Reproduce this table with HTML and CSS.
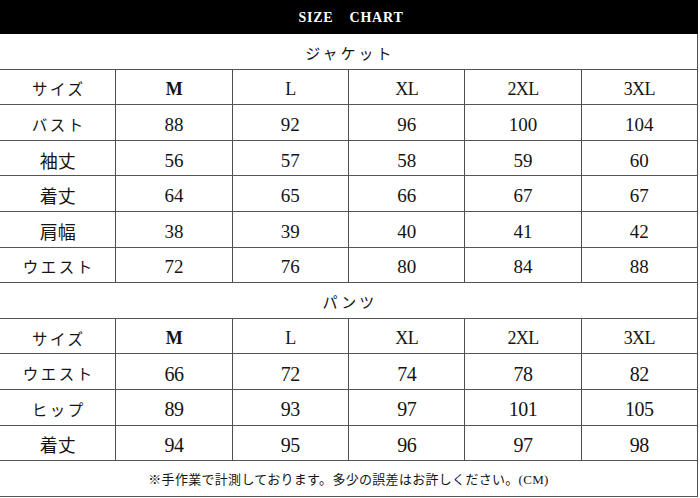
FILE: index.html
```html
<!DOCTYPE html>
<html lang="ja">
<head>
<meta charset="utf-8">
<title>SIZE CHART</title>
<link rel="stylesheet" href="styles.css">
</head>
<body>
<div class="chart">
  <div class="bar"><span>SIZE</span><span>CHART</span></div>

  <div class="grid">
    <div class="title jp">ジャケット</div>

    <div class="cell kana">サイズ</div>
    <div class="cell num size m">M</div>
    <div class="cell num size">L</div>
    <div class="cell num size">XL</div>
    <div class="cell num size">2XL</div>
    <div class="cell num size">3XL</div>

    <div class="cell kana">バスト</div>
    <div class="cell num">88</div>
    <div class="cell num">92</div>
    <div class="cell num">96</div>
    <div class="cell num">100</div>
    <div class="cell num">104</div>

    <div class="cell kanji">袖丈</div>
    <div class="cell num">56</div>
    <div class="cell num">57</div>
    <div class="cell num">58</div>
    <div class="cell num">59</div>
    <div class="cell num">60</div>

    <div class="cell kanji">着丈</div>
    <div class="cell num">64</div>
    <div class="cell num">65</div>
    <div class="cell num">66</div>
    <div class="cell num">67</div>
    <div class="cell num">67</div>

    <div class="cell kanji">肩幅</div>
    <div class="cell num">38</div>
    <div class="cell num">39</div>
    <div class="cell num">40</div>
    <div class="cell num">41</div>
    <div class="cell num">42</div>

    <div class="cell kana">ウエスト</div>
    <div class="cell num">72</div>
    <div class="cell num">76</div>
    <div class="cell num">80</div>
    <div class="cell num">84</div>
    <div class="cell num">88</div>

    <div class="title jp">パンツ</div>

    <div class="cell kana">サイズ</div>
    <div class="cell num size m">M</div>
    <div class="cell num size">L</div>
    <div class="cell num size">XL</div>
    <div class="cell num size">2XL</div>
    <div class="cell num size">3XL</div>

    <div class="cell kana">ウエスト</div>
    <div class="cell num narrow">66</div>
    <div class="cell num narrow">72</div>
    <div class="cell num narrow">74</div>
    <div class="cell num narrow">78</div>
    <div class="cell num narrow">82</div>

    <div class="cell kana">ヒップ</div>
    <div class="cell num narrow">89</div>
    <div class="cell num narrow">93</div>
    <div class="cell num narrow">97</div>
    <div class="cell num narrow">101</div>
    <div class="cell num narrow">105</div>

    <div class="cell kanji">着丈</div>
    <div class="cell num narrow">94</div>
    <div class="cell num narrow">95</div>
    <div class="cell num narrow">96</div>
    <div class="cell num narrow">97</div>
    <div class="cell num narrow">98</div>

    <div class="title note"><span>※手作業で計測しております。多少の誤差はお許しください。<span class="cm">(CM)</span></span></div>
  </div>
</div>
</body>
</html>
```

FILE: styles.css
```css
html, body {
  margin: 0;
  padding: 0;
  background: #ffffff;
}

body {
  width: 700px;
  height: 498px;
  overflow: hidden;
  color: #141414;
  font-family: "Liberation Serif", "Noto Sans CJK JP", serif;
}

.chart {
  width: 698px;
}

.bar {
  height: 34px;
  background: #000000;
  color: #ffffff;
  display: flex;
  justify-content: center;
  align-items: center;
  gap: 16px;
  font-family: "Liberation Serif", serif;
  font-size: 14px;
  font-weight: bold;
  letter-spacing: 0.8px;
  padding-left: 4px;
  padding-top: 2px;
  box-sizing: border-box;
}

.grid {
  display: grid;
  grid-template-columns: repeat(6, 1fr);
  grid-auto-rows: 35.6px;
}

.cell,
.title {
  box-sizing: border-box;
  border-right: 1px solid #4e4e4e;
  border-bottom: 1px solid #555555;
  display: flex;
  align-items: center;
  justify-content: center;
  padding-top: 3px;
}

.title {
  grid-column: 1 / -1;
}

.jp {
  font-family: "Noto Sans CJK JP", sans-serif;
  font-size: 15px;
  letter-spacing: 3px;
  padding-left: 3px;
}

.kana {
  font-family: "Noto Sans CJK JP", sans-serif;
  font-size: 15.5px;
  letter-spacing: 2.5px;
  padding-left: 2px;
}

.kanji {
  font-family: "Noto Sans CJK JP", sans-serif;
  font-size: 18px;
}

.num {
  font-family: "Liberation Serif", serif;
  font-size: 19px;
  padding-top: 5px;
}

.size {
  font-size: 18px;
  letter-spacing: -0.6px;
}

.m {
  font-weight: bold;
}

.narrow {
  font-size: 20px;
  letter-spacing: -0.5px;
}

.note {
  font-family: "Noto Sans CJK JP", sans-serif;
  font-size: 13px;
  letter-spacing: 0.3px;
  padding-top: 0;
}

.cm {
  font-family: "Liberation Serif", serif;
  font-size: 13px;
}
```
